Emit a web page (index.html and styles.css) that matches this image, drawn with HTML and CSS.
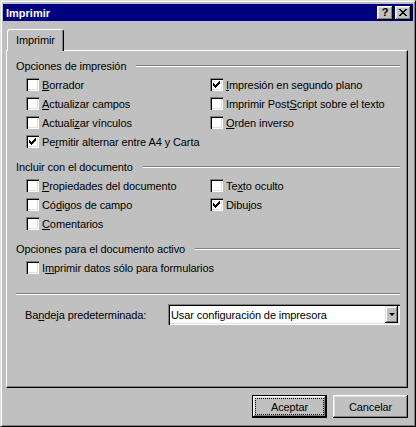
FILE: index.html
```html
<!DOCTYPE html>
<html lang="es">
<head>
<meta charset="utf-8">
<title>Imprimir</title>
<link rel="stylesheet" href="styles.css">
</head>
<body>
<div class="window">
  <div class="titlebar">
    <span class="title">Imprimir</span>
    <div class="tb-buttons">
      <span class="tb-btn help">?</span>
      <span class="tb-btn close">
        <svg width="8" height="7" viewBox="0 0 8 7" shape-rendering="crispEdges"><path d="M0 0h2v1h-2z M6 0h2v1h-2z M1 1h2v1h-2z M5 1h2v1h-2z M2 2h4v1h-4z M3 3h2v1h-2z M2 4h4v1h-4z M1 5h2v1h-2z M5 5h2v1h-2z M0 6h2v1h-2z M6 6h2v1h-2z" fill="#000"/></svg>
      </span>
    </div>
  </div>
  <div class="client">
    <div class="tabs"><div class="tab">Imprimir</div></div>
    <div class="panel">
      <div class="legend"><span>Opciones de impresión</span><div class="rule"></div></div>
      <div class="grid">
        <div class="cb-row"><span class="box"></span><span><u>B</u>orrador</span></div>
        <div class="cb-row"><span class="box checked"><svg width="7" height="7" viewBox="0 0 7 7" shape-rendering="crispEdges"><path d="M6 0h1v1h-1z M5 1h2v1h-2z M0 2h1v1h-1z M4 2h3v1h-3z M0 3h2v1h-2z M3 3h3v1h-3z M0 4h5v1h-5z M1 5h3v1h-3z M2 6h1v1h-1z" fill="#000"/></svg></span><span><u>I</u>mpresión en segundo plano</span></div>
        <div class="cb-row"><span class="box"></span><span><u>A</u>ctualizar campos</span></div>
        <div class="cb-row"><span class="box"></span><span>Imprimir Post<u>S</u>cript sobre el texto</span></div>
        <div class="cb-row"><span class="box"></span><span>Actuali<u>z</u>ar vínculos</span></div>
        <div class="cb-row"><span class="box"></span><span><u>O</u>rden inverso</span></div>
        <div class="cb-row wide"><span class="box checked"><svg width="7" height="7" viewBox="0 0 7 7" shape-rendering="crispEdges"><path d="M6 0h1v1h-1z M5 1h2v1h-2z M0 2h1v1h-1z M4 2h3v1h-3z M0 3h2v1h-2z M3 3h3v1h-3z M0 4h5v1h-5z M1 5h3v1h-3z M2 6h1v1h-1z" fill="#000"/></svg></span><span>Pe<u>r</u>mitir alternar entre A4 y Carta</span></div>
      </div>

      <div class="legend gap"><span>Incluir con el documento</span><div class="rule"></div></div>
      <div class="grid">
        <div class="cb-row"><span class="box"></span><span><u>P</u>ropiedades del documento</span></div>
        <div class="cb-row"><span class="box"></span><span>Te<u>x</u>to oculto</span></div>
        <div class="cb-row"><span class="box"></span><span>Có<u>d</u>igos de campo</span></div>
        <div class="cb-row"><span class="box checked"><svg width="7" height="7" viewBox="0 0 7 7" shape-rendering="crispEdges"><path d="M6 0h1v1h-1z M5 1h2v1h-2z M0 2h1v1h-1z M4 2h3v1h-3z M0 3h2v1h-2z M3 3h3v1h-3z M0 4h5v1h-5z M1 5h3v1h-3z M2 6h1v1h-1z" fill="#000"/></svg></span><span>Dibu<u>j</u>os</span></div>
        <div class="cb-row wide"><span class="box"></span><span><u>C</u>omentarios</span></div>
      </div>

      <div class="legend gap"><span>Opciones para el documento activo</span><div class="rule"></div></div>
      <div class="grid">
        <div class="cb-row wide"><span class="box"></span><span>I<u>m</u>primir datos sólo para formularios</span></div>
      </div>

      <div class="sep"></div>

      <div class="tray">
        <span class="tray-label">Ba<u>n</u>deja predeterminada:</span>
        <div class="select">
          <span class="select-text">Usar configuración de impresora</span>
          <span class="drop-btn"><span class="arrow"></span></span>
        </div>
      </div>
    </div>
    <div class="buttons">
      <div class="btn default"><span class="focus">Aceptar</span></div>
      <div class="btn"><span class="label">Cancelar</span></div>
    </div>
  </div>
</div>
</body>
</html>
```

FILE: styles.css
```css
* { box-sizing: border-box; }
html, body { margin: 0; padding: 0; }
body {
  width: 416px;
  height: 427px;
  overflow: hidden;
  background: #c0c0c0;
  font-family: "Liberation Sans", Arial, sans-serif;
  font-size: 11px;
  letter-spacing: -0.1px;
  color: #000;
}
u { text-decoration: underline; text-underline-offset: 1px; }

.window {
  width: 416px;
  height: 427px;
  background: #c0c0c0;
  border: 1px solid;
  border-color: #dfdfdf #000 #000 #dfdfdf;
  box-shadow: inset 1px 1px #fff, inset -1px -1px #808080;
  padding: 3px 2px 2px 2px;
  display: flex;
  flex-direction: column;
}

.titlebar {
  height: 17px;
  background: #000080;
  display: flex;
  align-items: center;
  justify-content: space-between;
  padding: 0 2px 0 3px;
}
.title { color: #fff; font-weight: bold; font-size: 11px; letter-spacing: 0; }
.tb-buttons { display: flex; gap: 2px; }
.tb-btn {
  width: 16px;
  height: 14px;
  background: #c0c0c0;
  box-shadow: inset -1px -1px #000, inset 1px 1px #fff, inset -2px -2px #808080, inset 2px 2px #dfdfdf;
  display: flex;
  align-items: center;
  justify-content: center;
  font-weight: bold;
  font-size: 11px;
  line-height: 1;
}
.tb-btn svg { display: block; }

.client {
  flex: 1;
  padding: 8px 5px 0 3px;
  display: flex;
  flex-direction: column;
}
.tabs { height: 21px; display: flex; padding-left: 1px; }
.tab {
  position: relative;
  z-index: 1;
  width: 57px;
  height: 22px;
  background: #c0c0c0;
  border-top: 1px solid #fff;
  border-left: 1px solid #fff;
  border-right: 1px solid #000;
  border-radius: 3px 3px 0 0;
  box-shadow: inset -1px 0 #808080;
  padding: 4px 0 0 8px;
  line-height: 13px;
}

.panel {
  height: 338px;
  border: 1px solid;
  border-color: #fff #000 #000 #fff;
  box-shadow: inset -1px -1px #808080;
  padding: 5px 7px 0 9px;
}

.legend { display: flex; align-items: center; height: 19px; }
.legend span { white-space: nowrap; }
.legend.gap { margin-top: 6px; }
.rule {
  flex: 1;
  height: 2px;
  border-top: 1px solid #808080;
  border-bottom: 1px solid #fff;
  margin-left: 10px;
}

.grid {
  display: grid;
  grid-template-columns: 184px 1fr;
  padding-left: 10px;
}
.cb-row { height: 19px; display: flex; align-items: center; white-space: nowrap; }
.cb-row.wide { grid-column: 1 / span 2; }
.box {
  width: 13px;
  height: 13px;
  flex: none;
  background: #fff;
  box-shadow: inset 1px 1px #808080, inset 2px 2px #000, inset -1px -1px #fff, inset -2px -2px #dfdfdf;
  margin-right: 3px;
  display: flex;
  align-items: center;
  justify-content: center;
}
.box svg { display: block; }

.sep {
  margin-top: 16px;
  height: 2px;
  border-top: 1px solid #808080;
  border-bottom: 1px solid #fff;
}

.tray {
  display: flex;
  align-items: center;
  margin-top: 9px;
  padding-left: 9px;
}
.tray-label { width: 143px; white-space: nowrap; }
.select {
  width: 232px;
  height: 21px;
  background: #fff;
  box-shadow: inset 1px 1px #808080, inset 2px 2px #000, inset -1px -1px #fff, inset -2px -2px #dfdfdf;
  display: flex;
  align-items: center;
  justify-content: space-between;
  padding: 2px;
}
.select-text { padding-left: 1px; white-space: nowrap; }
.drop-btn {
  width: 13px;
  height: 17px;
  background: #c0c0c0;
  box-shadow: inset -1px -1px #000, inset 1px 1px #dfdfdf, inset -2px -2px #808080, inset 2px 2px #fff;
  display: flex;
  align-items: center;
  justify-content: center;
}
.arrow {
  width: 0;
  height: 0;
  border-left: 3px solid transparent;
  border-right: 3px solid transparent;
  border-top: 3px solid #000;
}

.buttons {
  display: flex;
  justify-content: flex-end;
  gap: 6px;
  margin-top: 7px;
}
.btn {
  width: 75px;
  height: 23px;
  background: #c0c0c0;
  box-shadow: inset -1px -1px #000, inset 1px 1px #fff, inset -2px -2px #808080, inset 2px 2px #dfdfdf;
  display: flex;
  align-items: center;
  justify-content: center;
}
.btn.default {
  border: 1px solid #000;
  padding: 3px;
}
.btn .focus {
  flex: 1;
  align-self: stretch;
  display: flex;
  align-items: center;
  justify-content: center;
  outline: 1px dotted #000;
  outline-offset: 0;
}
```
